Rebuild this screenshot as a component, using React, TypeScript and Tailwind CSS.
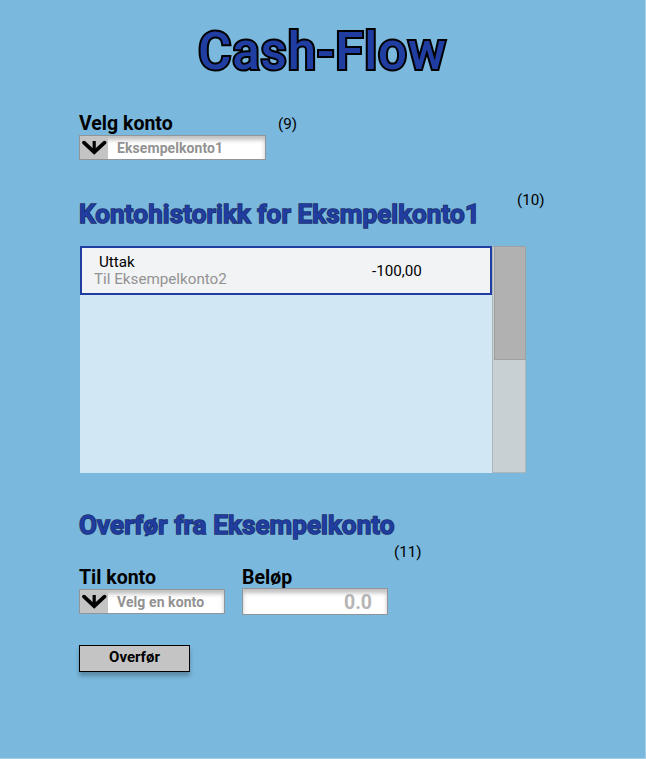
import React from "react";

function ArrowIcon() {
  return (
    <span className="flex h-full w-[28px] shrink-0 items-center justify-center bg-[#c4c4c4]">
      <svg width="26" height="19" viewBox="0 0 26 19" fill="none" stroke="#000">
        <path d="M3 4.6 L13.2 14.2 L23.5 4.6" strokeWidth="3.7" strokeLinecap="round" />
        <path d="M13.2 3 V14" strokeWidth="3.2" />
      </svg>
    </span>
  );
}

function Select({ value, className }: { value: string; className: string }) {
  return (
    <div
      className={`flex h-[25px] border border-[#8f9599] bg-white shadow-[inset_0_4px_4px_rgba(0,0,0,0.25)] ${className}`}
    >
      <ArrowIcon />
      <span className="ml-[9px] whitespace-nowrap text-[14px] leading-[24px] font-bold tracking-[0.08px] text-[#929292]">
        {value}
      </span>
    </div>
  );
}

function Note({ children, className }: { children: React.ReactNode; className: string }) {
  return <span className={`whitespace-nowrap text-[15.2px] leading-[18px] text-black ${className}`}>{children}</span>;
}

const label = "h-[23px] whitespace-nowrap text-[19.5px] leading-[23px] font-bold text-black";
const heading =
  "whitespace-nowrap text-[26px] leading-[32px] font-semibold tracking-[0.13px] text-[#203da2] [-webkit-text-stroke:1.6px_#1c2f68] [paint-order:stroke_fill]";

export default function App() {
  return (
    <div className="h-[759px] w-[646px] overflow-hidden border-r border-b border-[#a3cee4] bg-[#7ab8dd] font-['Roboto','Liberation_Sans',sans-serif]">
      <h1 className="mt-[22px] ml-[198px] h-[60px] whitespace-nowrap text-[51px] leading-[60px] font-medium tracking-[0.9px] text-[#203da2] [-webkit-text-stroke:4px_#000] [paint-order:stroke_fill]">
        Cash-Flow
      </h1>

      <div className="mt-[30px] ml-[79px] flex h-[23px]">
        <h3 className={`w-[199px] ${label}`}>Velg konto</h3>
        <Note className="mt-[3px]">(9)</Note>
      </div>
      <Select value="Eksempelkonto1" className="ml-[79px] w-[187px]" />

      <div className="mt-[30px] ml-[79px] flex h-[56px]">
        <h2 className={`mt-[8px] w-[438px] ${heading}`}>Kontohistorikk for Eksmpelkonto1</h2>
        <Note className="mt-[1px]">(10)</Note>
      </div>

      <div className="ml-[80px] flex h-[227px] w-[446px]">
        <div className="w-[412px] bg-[#d1e7f4]">
          <div className="flex h-[49px] border-2 border-[#203da2] bg-[#f2f3f5]">
            <div className="w-[290px] pt-[5px] pl-[12px] text-[15.2px] leading-[18px]">
              <div className="pl-[5px] text-black">Uttak</div>
              <div className="-mt-px text-[#929292]">Til Eksempelkonto2</div>
            </div>
            <div className="pt-[14px] text-[15.2px] leading-[18px] text-black">-100,00</div>
          </div>
        </div>
        <div className="w-[34px] border border-[#aeb6b9] bg-[#c8d0d3]">
          <div className="-mt-px -mr-px ml-px h-[114px] border border-[#a0a0a0] bg-[#b1b1b1]" />
        </div>
      </div>

      <h2 className={`mt-[36px] ml-[79px] h-[32px] ${heading}`}>Overfør fra Eksempelkonto</h2>
      <Note className="mt-[2px] ml-[394px] block h-[18px]">(11)</Note>

      <div className="mt-[5px] ml-[79px] flex gap-[17px]">
        <div className="w-[146px]">
          <h3 className={label}>Til konto</h3>
          <Select value="Velg en konto" className="w-[146px]" />
        </div>
        <div className="w-[146px]">
          <h3 className={label}>Beløp</h3>
          <div className="-mt-px h-[27px] border border-[#8f9599] bg-white pr-[15px] text-right text-[19.5px] leading-[27px] font-bold text-[#b5b5b5] shadow-[inset_0_4px_4px_rgba(0,0,0,0.25)]">
            0.0
          </div>
        </div>
      </div>

      <button className="mt-[30px] ml-[79px] block h-[27px] w-[111px] border border-black bg-[#c4c4c4] pb-[2px] text-[15px] leading-[23px] font-bold text-black shadow-[0_4px_4px_rgba(0,0,0,0.25)]">
        Overfør
      </button>
    </div>
  );
}
